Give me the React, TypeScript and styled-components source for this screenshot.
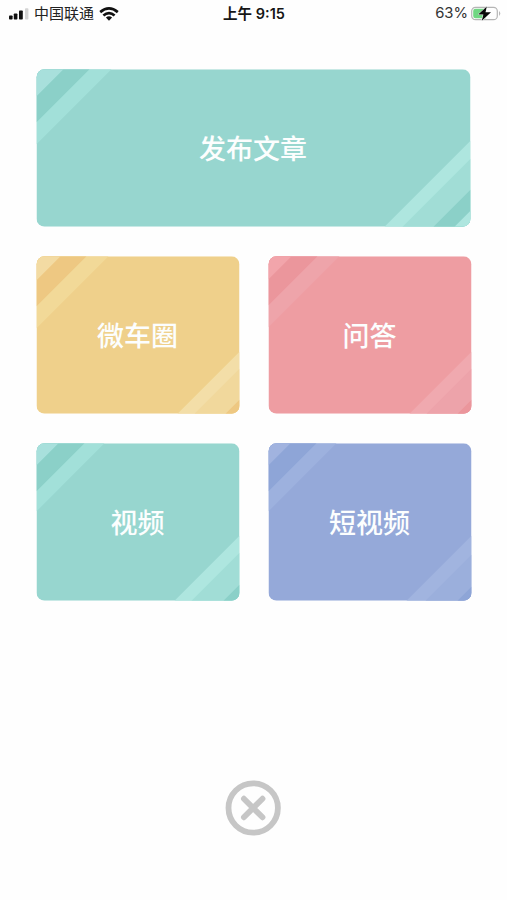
import React from 'react';
import styled, { createGlobalStyle } from 'styled-components';

const GlobalStyle = createGlobalStyle`
  * { box-sizing: border-box; }
  body {
    margin: 0;
    background: #fefefe;
    font-family: Inter, "Noto Sans CJK SC", sans-serif;
  }
`;

const Screen = styled.main`
  display: flex;
  flex-direction: column;
  align-items: center;
  width: 507px;
  height: 900px;
  overflow: hidden;
`;

const StatusBar = styled.header`
  display: grid;
  grid-template-columns: 1fr auto 1fr;
  align-items: center;
  width: 100%;
  height: 27px;
  padding: 0 5px 0 8px;
  color: #161616;
  font-size: 15px;
  line-height: 27px;
`;

const StatusGroup = styled.div<{ $end?: boolean }>`
  display: flex;
  align-items: center;
  justify-content: ${({ $end }) => ($end ? 'flex-end' : 'flex-start')};
  svg { flex: none; display: block; }
`;

const Carrier = styled.span`
  margin: 0 5px;
  font-size: 15px;
  color: #222;
`;

const Clock = styled.time`
  margin-right: 2px;
  font-size: 14.5px;
  font-weight: 600;
  white-space: pre;
`;

const Percent = styled.span`
  margin-right: 3px;
  font-size: 14.8px;
  color: #333;
`;

const Grid = styled.nav`
  display: grid;
  grid-template-columns: 204px 204px;
  grid-auto-rows: 158px;
  gap: 29px 28px;
  margin-top: 42px;
  width: 436px;
`;

const Card = styled.button<{ $wide?: boolean }>`
  position: relative;
  display: flex;
  align-items: center;
  justify-content: center;
  grid-column: ${({ $wide }) => ($wide ? '1 / -1' : 'auto')};
  width: ${({ $wide }) => ($wide ? '435px' : '204px')};
  padding: 0;
  border: 0;
  background: none;
`;

const Art = styled.svg`
  position: absolute;
  inset: 0;
  width: 100%;
  height: 100%;
`;

const Label = styled.span`
  position: relative;
  color: #fcfefe;
  font: 500 27px/40px "Noto Sans CJK SC", sans-serif;
`;

const Close = styled.button`
  display: block;
  width: 57px;
  height: 56px;
  margin-top: 179px;
  padding: 0;
  border: 0;
  background: none;
  svg { display: block; }
`;

type Tone = { fill: string; tip: string; dark: string; band: string; glow: string; soft: string };

const teal: Tone = { fill: '#97d6cf', tip: '#a8e0dc', dark: '#8bd0c8', band: '#a2e0d9', glow: '#aee6df', soft: '#a1ddd6' };
const yellow: Tone = { fill: '#efd08b', tip: '#f3dba3', dark: '#eec882', band: '#f2d998', glow: '#f3dea8', soft: '#f1d89c' };
const red: Tone = { fill: '#ee9da2', tip: '#f2a5ab', dark: '#eb969c', band: '#eea4aa', glow: '#f0a9af', soft: '#eda3aa' };
const blue: Tone = { fill: '#95a9d9', tip: '#a1b3df', dark: '#8ea5d7', band: '#9db1de', glow: '#a1b4df', soft: '#9bafdc' };

type Item = { id: string; label: string; tone: Tone; wide?: boolean; top: number[]; bottom: number[] };

const items: Item[] = [
  { id: 'article', label: '发布文章', tone: teal, wide: true, top: [75, 53, 27], bottom: [86, 68, 37, 16] },
  { id: 'circle', label: '微车圈', tone: yellow, top: [72, 50, 24], bottom: [62, 45, 14] },
  { id: 'answers', label: '问答', tone: red, top: [71, 49, 23], bottom: [62, 45, 14] },
  { id: 'video', label: '视频', tone: teal, top: [68, 48, 22], bottom: [65, 48, 16] },
  { id: 'short', label: '短视频', tone: blue, top: [68, 48, 22], bottom: [65, 46, 14] },
];

function CardArt({ id, tone, wide, top, bottom }: Item) {
  const w = wide ? 434 : 203;
  const h = 157.4;
  const topFills = [tone.band, tone.dark, tone.tip];
  const bottomFills = [tone.glow, tone.soft, tone.dark, tone.glow];
  return (
    <Art viewBox={`-0.5 -0.3 ${w + 1} 158`} aria-hidden="true">
      <clipPath id={`${id}-shape`}>
        <rect width={w} height={h} rx="8" />
      </clipPath>
      <g clipPath={`url(#${id}-shape)`}>
        <rect width={w} height={h} fill={tone.fill} />
        {top.map((d, i) => <polygon key={`t${d}`} points={`0,0 ${d},0 0,${d}`} fill={topFills[i]} />)}
        {bottom.map((d, i) => (
          <polygon key={`b${d}`} points={`${w},${h} ${w - d},${h} ${w},${h - d}`} fill={bottomFills[i]} />
        ))}
      </g>
    </Art>
  );
}

export default function App() {
  return (
    <>
      <GlobalStyle />
      <Screen>
        <StatusBar>
          <StatusGroup>
            <svg width="21" height="12" viewBox="0 0 21 12">
              <rect x="1" y="7.5" width="3.6" height="4" rx="0.8" fill="#111" />
              <rect x="5.8" y="5.5" width="3.6" height="6" rx="0.8" fill="#111" />
              <rect x="11" y="2.5" width="3.8" height="9" rx="0.8" fill="#111" />
              <rect x="17" y="0.3" width="3.4" height="11.2" rx="0.8" fill="#d4d4d4" />
            </svg>
            <Carrier>中国联通</Carrier>
            <svg width="20" height="14" viewBox="0 0 20 14" fill="none" stroke="#111" strokeWidth="2.7">
              <path d="M1.2 5.1Q10-2.2 18.8 5.1" />
              <path d="M4.4 8.6Q10 3.8 15.6 8.6" />
              <path d="M6.9 10.5Q10 7.8 13.1 10.5L10 13.7Z" fill="#111" stroke="none" />
            </svg>
          </StatusGroup>
          <Clock>上午 9:15</Clock>
          <StatusGroup $end>
            <Percent>63%</Percent>
            <svg width="31" height="16" viewBox="0 0 31 16">
              <rect x="0.7" y="1.3" width="25.6" height="12.4" rx="3.8" fill="#fefefe" stroke="#b5b5b5" strokeWidth="1.2" />
              <path d="M4.5 2.8H15V12.2H4.5Q2.2 12.2 2.2 10V5Q2.2 2.8 4.5 2.8Z" fill="#70d783" />
              <path d="M28 5.1Q30.7 7.5 28 9.9Z" fill="#b9b9b9" />
              <path d="M15.8 0.6L7.2 8.5H12.4L10.8 14.8L20 6.3H14.5Z" fill="#090909" stroke="#fefefe" strokeWidth="1" paintOrder="stroke" />
            </svg>
          </StatusGroup>
        </StatusBar>
        <Grid>
          {items.map((item) => (
            <Card key={item.id} $wide={item.wide}>
              <CardArt {...item} />
              <Label>{item.label}</Label>
            </Card>
          ))}
        </Grid>
        <Close aria-label="关闭">
          <svg width="57" height="56" viewBox="0 0 57 56" fill="none" stroke="#c6c6c6">
            <circle cx="28.2" cy="28" r="24.7" strokeWidth="5.8" />
            <path d="M18.9 18.7L37.5 37.3M37.5 18.7L18.9 37.3" strokeWidth="5.8" strokeLinecap="round" />
          </svg>
        </Close>
      </Screen>
    </>
  );
}
